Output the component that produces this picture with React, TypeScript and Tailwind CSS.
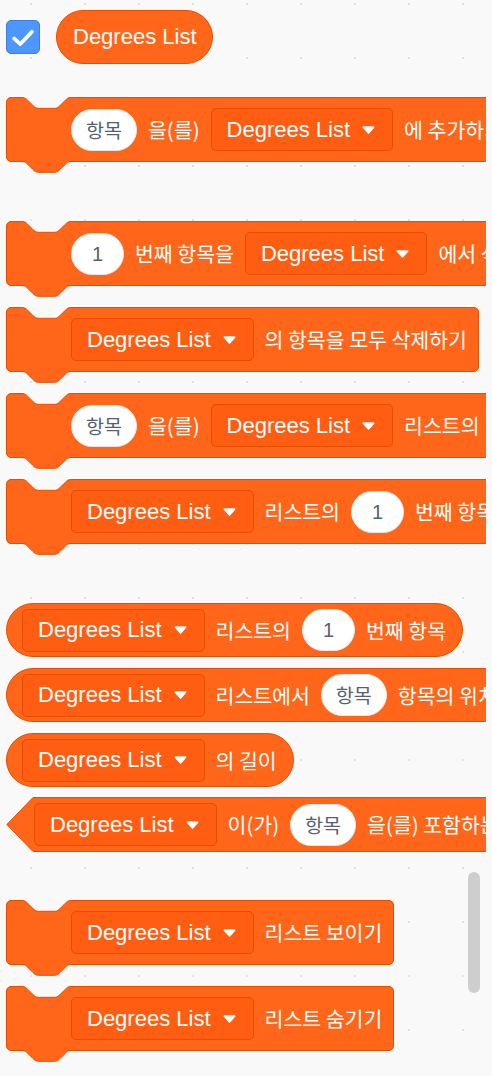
import React from "react";

const KR = "font-['Noto_Sans_CJK_KR',sans-serif] text-[20.5px] text-white whitespace-nowrap leading-none";

function Arrow() {
  return (
    <svg width="13" height="8" viewBox="0 0 13 8" className="shrink-0">
      <path d="M1.5 1.2 H11.5 L6.5 6.8 Z" fill="#fff" stroke="#fff" strokeWidth="1.8" strokeLinejoin="round" />
    </svg>
  );
}

function Dropdown() {
  return (
    <div className="flex items-center shrink-0 h-[43px] pl-[15px] pr-[17px] gap-[12px] rounded-[5px] bg-[#ff5d12] border border-[#e64d00]">
      <span className="font-['Liberation_Sans',Arial,sans-serif] text-[22px] text-white whitespace-nowrap leading-none">Degrees List</span>
      <Arrow />
    </div>
  );
}

function OvalText({ t }: { t: string }) {
  return (
    <div className="flex items-center justify-center shrink-0 h-[42px] w-[66px] rounded-full bg-white border border-[#e6e6e6]">
      <span className="font-['Noto_Sans_CJK_KR',sans-serif] text-[19.6px] text-[#575e75] leading-none whitespace-nowrap">{t}</span>
    </div>
  );
}

function OvalNum({ t }: { t: string }) {
  return (
    <div className="flex items-center justify-center shrink-0 h-[42px] w-[53px] rounded-full bg-white border border-[#e6e6e6]">
      <span className="font-['Liberation_Sans',Arial,sans-serif] text-[20px] text-[#575e75] leading-none">{t}</span>
    </div>
  );
}

function L({ t }: { t: string }) {
  return <span className={KR}>{t}</span>;
}

const NOTCH =
  "C18.9,0.5 20.25,1.85 21.6,3.2 L27,8.6 C28.35,9.95 29.7,11.3 32.4,11.3 H48.6 C51.3,11.3 52.65,9.95 54,8.6 L59.4,3.2 C60.75,1.85 62.1,0.5 64.8,0.5";

function Stack({ children, className = "" }: { children: React.ReactNode; className?: string }) {
  return (
    <div
      className={`relative flex items-center shrink-0 w-max h-[65px] pl-[64px] pr-[11px] gap-[11px] rounded-[5px] bg-[#ff661a] border border-[#e64d00] ${className}`}
    >
      <svg width="66" height="13" className="absolute left-[-1px] top-[-1px] overflow-visible">
        <path d={`M16.2,0 L16.2,0.5 ${NOTCH} L64.8,0 Z`} fill="#f9f9f9" />
        <path d={`M16.2,0.5 ${NOTCH}`} fill="none" stroke="#e64d00" strokeWidth="1" />
      </svg>
      <svg width="66" height="13" className="absolute left-[-1px] top-full overflow-visible">
        <path d={`M16.2,-0.2 L16.2,0.5 ${NOTCH} L64.8,-0.2 Z`} fill="#ff661a" />
        <path d={`M16.2,0.5 ${NOTCH}`} fill="none" stroke="#e64d00" strokeWidth="1" />
      </svg>
      {children}
    </div>
  );
}

function Reporter({ children, className = "" }: { children: React.ReactNode; className?: string }) {
  return (
    <div
      className={`flex items-center shrink-0 w-max h-[54px] pl-[15px] pr-[16px] gap-[11px] rounded-full bg-[#ff661a] border border-[#e64d00] ${className}`}
    >
      {children}
    </div>
  );
}

function BoolBlock({ children, className = "" }: { children: React.ReactNode; className?: string }) {
  return (
    <div className={`flex items-stretch shrink-0 w-max h-[55px] ${className}`}>
      <svg width="28" height="55" className="shrink-0">
        <path d="M28.5,0.5 L27,0.5 L0.8,27.5 L27,54.5 L28.5,54.5 Z" fill="#ff661a" />
        <path d="M28.5,0.5 L27,0.5 L0.8,27.5 L27,54.5 L28.5,54.5" fill="none" stroke="#e64d00" strokeWidth="1" strokeLinejoin="round" />
      </svg>
      <div className="flex items-center gap-[11px] pr-[16px] bg-[#ff661a] border-y border-[#e64d00]">{children}</div>
    </div>
  );
}

export default function App() {
  return (
    <div className="relative w-[492px] h-[1076px] overflow-hidden bg-[#f9f9f9] bg-[image:radial-gradient(circle,#e2e2e2_0.8px,transparent_1.3px)] bg-[length:54px_54px] bg-[position:4px_-23px]">
      <div className="w-[486px] overflow-hidden pl-[6px] pt-[10px] pb-[20px] flex flex-col items-start">
        <div className="flex items-center gap-[16px] h-[54px]">
          <div className="w-[34px] h-[34px] rounded-[5px] bg-[#4c97ff] border border-[#3d7fd9] flex items-center justify-center">
            <svg width="34" height="34" viewBox="0 0 34 34">
              <path d="M7.5 18.5 L14.2 24.5 L26.5 11.5" fill="none" stroke="#fff" strokeWidth="4" strokeLinecap="round" strokeLinejoin="round" />
            </svg>
          </div>
          <div className="flex items-center h-[54px] pl-[16px] pr-[15px] rounded-full bg-[#ff661a] border border-[#e64d00]">
            <span className="font-['Liberation_Sans',Arial,sans-serif] text-[22px] text-white leading-none whitespace-nowrap">Degrees List</span>
          </div>
        </div>

        <Stack className="mt-[33px]">
          <OvalText t="항목" />
          <L t="을(를)" />
          <Dropdown />
          <L t="에 추가하기" />
        </Stack>

        <Stack className="mt-[59px]">
          <OvalNum t="1" />
          <L t="번째 항목을" />
          <Dropdown />
          <L t="에서 삭제하기" />
        </Stack>

        <Stack className="mt-[21px]">
          <Dropdown />
          <L t="의 항목을 모두 삭제하기" />
        </Stack>

        <Stack className="mt-[21px]">
          <OvalText t="항목" />
          <L t="을(를)" />
          <Dropdown />
          <L t="리스트의" />
          <OvalNum t="1" />
          <L t="번째에 넣기" />
        </Stack>

        <Stack className="mt-[21px]">
          <Dropdown />
          <L t="리스트의" />
          <OvalNum t="1" />
          <L t="번째 항목을" />
          <OvalText t="항목" />
          <L t="(으)로 바꾸기" />
        </Stack>

        <Reporter className="mt-[59px]">
          <Dropdown />
          <L t="리스트의" />
          <OvalNum t="1" />
          <L t="번째 항목" />
        </Reporter>

        <Reporter className="mt-[11px]">
          <Dropdown />
          <L t="리스트에서" />
          <OvalText t="항목" />
          <L t="항목의 위치" />
        </Reporter>

        <Reporter className="mt-[11px]">
          <Dropdown />
          <L t="의 길이" />
        </Reporter>

        <BoolBlock className="mt-[10px]">
          <Dropdown />
          <L t="이(가)" />
          <OvalText t="항목" />
          <L t="을(를) 포함하는가?" />
        </BoolBlock>

        <Stack className="mt-[48px]">
          <Dropdown />
          <L t="리스트 보이기" />
        </Stack>

        <Stack className="mt-[21px]">
          <Dropdown />
          <L t="리스트 숨기기" />
        </Stack>
      </div>
      <div className="absolute left-[468px] top-[872px] w-[12px] h-[121px] rounded-full bg-[#cecece]" />
    </div>
  );
}
